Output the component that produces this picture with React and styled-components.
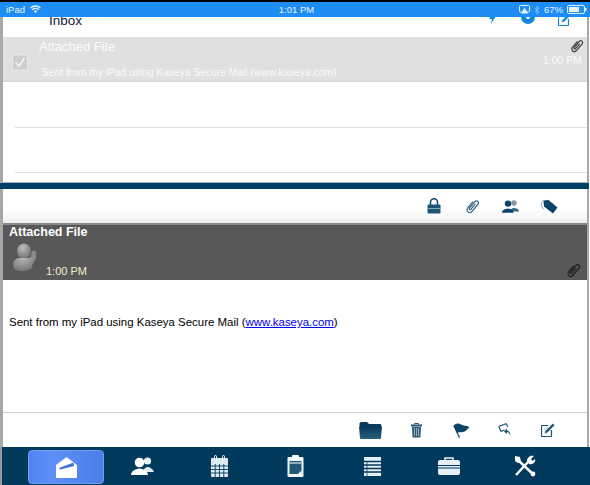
import React from "react";
import styled, { createGlobalStyle } from "styled-components";

const Global = createGlobalStyle`
  html, body { margin: 0; padding: 0; background: #fff; }
  #root { width: 590px; height: 485px; overflow: hidden; }
  a { color: #0000ee; }
`;
const Page = styled.div`
  width: 590px; height: 485px; display: flex; flex-direction: column; overflow: hidden;
  font-family: "Liberation Sans", Arial, sans-serif; background: #fff;
  border-top: 2px solid #000; box-sizing: border-box;
`;
const StatusBar = styled.div`
  height: 15px; flex: none; background: #1e8cf5; color: #e8f4ff; font-size: 9.5px;
  display: grid; grid-template-columns: 1fr auto 1fr; align-items: center; padding: 0 3px 0 6px;
`;
const StatusSide = styled.div`
  display: flex; align-items: center; gap: ${p => p.$gap || 5}px; justify-content: ${p => p.$end ? "flex-end" : "flex-start"};
`;
const Framed = styled.div`
  flex: 1; min-height: 0; display: flex; flex-direction: column;
  border-left: 3px solid #a8a8a8; border-right: 2px solid #a8a8a8; margin-right: 1px;
`;
const ListPane = styled.section`
  height: 165px; flex: none; display: flex; flex-direction: column; overflow: hidden; background: #fff;
`;
const ListHead = styled.div`
  height: 20px; flex: none; position: relative; overflow: hidden; display: flex;
`;
const InboxTitle = styled.div`
  position: absolute; left: 46px; top: -4px; font-size: 13.5px; color: #15233a;
`;
const HeadIcons = styled.div`
  position: absolute; right: 15px; top: -5px; display: flex; gap: 23px; align-items: flex-start;
`;
const SelectedRow = styled.div`
  height: 45px; flex: none; background: #e0e0df; display: grid; grid-template-columns: 36px 1fr auto;
  color: #fff; border-bottom: 1px solid #d4d4d4; box-sizing: border-box;
`;
const CheckCell = styled.div`
  display: flex; align-items: center; padding: 6px 0 0 9px;
`;
const RowText = styled.div`
  display: flex; flex-direction: column;
`;
const RowTitle = styled.div`font-size: 13px; line-height: 19px; color: #fbfbfb;`;
const RowSnippet = styled.div`font-size: 10px; line-height: 12px; margin: 11px 0 0 3px; color: #fafafa; letter-spacing: .12px;`;
const RowMeta = styled.div`
  display: flex; flex-direction: column; align-items: flex-end; padding: 1px 5px 0 0; font-size: 10.5px; color: #fafafa; line-height: 12px;
`;
const RowClip = styled.div`line-height: 0; margin-right: -3px;`;
const EmptyRow = styled.div`
  height: ${p => p.$h}px; flex: none; box-sizing: border-box; border-bottom: 1px solid #dfdfdf; margin-left: 12px;
`;
const Divider = styled.div`
  height: 7px; flex: none; background: #004068; border-top: 1px solid #a9aeb2; box-sizing: border-box;
  margin: 0 -2px 0 -3px;
`;
const Toolbar = styled.div`
  flex: none; height: ${p => p.$h}px; display: flex; align-items: center; justify-content: flex-end;
  padding-right: ${p => p.$pr}px; background: ${p => p.$bg || "#fff"};
`;
const ToolSlot = styled.div`
  width: ${p => p.$w}px; display: flex; justify-content: center; align-items: center;
`;
const MessageHead = styled.header`
  height: 57px; flex: none; background: #595858; border-top: 2px solid #8a8a8a; box-sizing: border-box;
  display: grid; grid-template-columns: auto 1fr auto; grid-template-rows: auto 1fr; padding: 0 5px 0 6px; color: #fff;
`;
const HeadTitle = styled.div`
  grid-column: 1 / 4; font-size: 12.5px; font-weight: 700; line-height: 14px; color: #fff;
`;
const AvatarBox = styled.div`
  width: 30px; box-sizing: border-box; display: flex; align-items: flex-start; padding: 4px 0 0 4px;
`;
const HeadTime = styled.div`
  font-size: 11px; color: #f3eccb; align-self: end; padding: 0 0 3px 7px;
`;
const HeadClip = styled.div`align-self: end; justify-self: end; line-height: 0; padding-bottom: 1px;`;
const Body = styled.div`
  flex: 1; min-height: 0; padding: 36px 6px 0; font-size: 11.45px; line-height: 13px; color: #000; border-bottom: 1px solid #d0d0d0;
`;
const Nav = styled.nav`
  height: 38px; flex: none; background: #013a5c; display: grid; grid-template-columns: repeat(7, 76.5px);
  padding-left: 28px; box-sizing: border-box; align-items: stretch; position: relative;
`;
const NavItem = styled.div`
  display: flex; align-items: center; justify-content: center; margin-top: ${p => p.$active ? 3 : 0}px;
  border-radius: 4px; box-sizing: border-box;
  ${p => p.$active ? `background: linear-gradient(90deg,#4f83ee,#5f90fa 30%,#4a7de6); border: 1px solid #6fa0f0; height: 34px; width:76px;` : ""}
`;
const Edge = styled.div`
  position: absolute; left: 0; top: 0; bottom: 0; width: 2px; background: #9a9a9a;
`;

const Wifi = () => (
  <svg width="11" height="9" viewBox="0 0 11 9"><path d="M.6 3a7 7 0 0 1 9.8 0M2.2 4.8a4.8 4.8 0 0 1 6.6 0" fill="none" stroke="#e6f3ff" strokeWidth="1.3"/><path d="M3.8 6.2a2.4 2.4 0 0 1 3.4 0L5.5 8z" fill="#e6f3ff"/></svg>
);
const Airplay = () => (
  <svg width="11" height="9" viewBox="0 0 11 9"><rect x=".5" y=".5" width="10" height="6.5" rx="1" fill="#1e8cf5" stroke="#e6f3ff"/><path d="M5.5 2.5 9 8.5H2z" fill="#e6f3ff"/></svg>
);
const Bluetooth = () => (
  <svg width="6" height="10" viewBox="0 0 6 10"><path d="M.5 2.8 5 7 3 9V1l2 2L.5 7.2" fill="none" stroke="#7fbdf5" strokeWidth="1"/></svg>
);
const Battery = () => (
  <svg width="20" height="9" viewBox="0 0 20 9"><rect x=".5" y=".5" width="17" height="8" rx="1.5" fill="none" stroke="#e6f3ff"/><rect x="2" y="2" width="10" height="5" fill="#e6f3ff"/><rect x="18" y="3" width="1.5" height="3" fill="#e6f3ff"/></svg>
);
const Check = () => (
  <svg width="16" height="17" viewBox="0 0 16 17"><rect x=".5" y="1" width="15" height="15" rx="2" fill="#cfcdcf" stroke="#e9e9e9"/><path d="M3.5 8.5 7 12l5.5-8" fill="none" stroke="#f4f4f4" strokeWidth="1.6"/></svg>
);
const Clip = ({ size = 15, color = "#3e3e3e", w = 1.2 }) => (
  <svg width={size} height={size} viewBox="0 0 16 16"><path d="M5.4 4.5V12a2.600 2.600 0 0 0 5.200 0V3a1.900 1.900 0 0 0-3.800 0v8a.9.9 0 0 0 1.800 0V5" fill="none" stroke={color} strokeWidth={w} strokeLinecap="round" transform="rotate(40 8 8)"/></svg>
);
const Lock = () => (
  <svg width="14" height="16" viewBox="0 0 14 16"><path d="M3.500 7V4.200a3.500 3.500 0 0 1 7 0V7" fill="none" stroke="#0a4468" strokeWidth="1.500"/><rect x=".5" y="6.500" width="13" height="9" rx="1" fill="#1a5678"/><path d="M1 10.500h12" stroke="#7ea3ba"/></svg>
);
const People = ({ c = "#0a4468" }) => (
  <svg width="17" height="13" viewBox="0 0 17 13"><circle cx="12" cy="3" r="2.700" fill="#7f98a8"/><path d="M8 11.500c0-2.500 2-3.300 4-3.800 2 .5 5 1 5 3.800z" fill={c} opacity=".8"/><circle cx="6" cy="3.600" r="3.200" fill={c}/><path d="M0 12.800c0-3 3-3.800 6-4.400 3 .6 5.500 1.400 5.500 4.400z" fill={c}/></svg>
);
const Tag = () => (
  <svg width="17" height="15" viewBox="0 0 17 15"><path d="M2.500 1.500 7.500 1l9 7.500-4.500 6-9-7z" fill="#0a4468"/><path d="M3.500 1C-.5 3-.5 7 3 10.500" fill="none" stroke="#8aa8bb"/></svg>
);
const Folder = () => (
  <svg width="23" height="18" viewBox="0 0 23 18"><defs><linearGradient id="fg" x1="0" y1="0" x2="0" y2="1"><stop offset="0" stopColor="#0a3c5c"/><stop offset="1" stopColor="#2a5f80"/></linearGradient></defs><path d="M.5 2.500Q.5 1 2 1h6l2 2h11q1.500 0 1.500 1.500V6H.5z" fill="#0a3a5a"/><path d="M0 6h23l-1 11a1 1 0 0 1-1 1H2a1 1 0 0 1-1-1z" fill="url(#fg)"/></svg>
);
const Trash = () => (
  <svg width="11" height="15" viewBox="0 0 11 15"><path d="M3.500 1.500V.5h4v1" fill="none" stroke="#345f7a"/><rect x="0" y="1.500" width="11" height="2" fill="#24526f"/><path d="M1 4h9l-.6 10.500H1.600z" fill="#2e5b78"/><path d="M3.500 5v8M5.500 5v8M7.500 5v8" stroke="#a9c0cf" strokeWidth=".8"/></svg>
);
const Flag = () => (
  <svg width="17" height="15" viewBox="0 0 17 15"><path d="M.8 2.500 6.500 14.500" stroke="#0a4468" strokeWidth="1.200"/><path d="M.8 2.500C3 .2 6 .2 8 1.500c2.500 1.500 5 .8 8.500 2.500C14 6.500 12.500 9 8.500 9.200 6.500 9.500 5.500 8.500 3.800 10z" fill="#0a4468"/></svg>
);
const Reply = () => (
  <svg width="14" height="14" viewBox="0 0 14 14"><path d="M.8 3.500 8 .8l2 3.200M3 8.500.8 3.500M3 8.500l3.500-1.500" fill="none" stroke="#1c506f" strokeWidth="1.200"/><path d="M12.500 13C12.300 9.500 11 7.500 9 7.500V5.500L6 8.500l3 2.500V9c1.500 0 2.500 1.500 3.500 4z" fill="#1c506f"/></svg>
);
const Compose = ({ c = "#1c506f" }) => (
  <svg width="14" height="14" viewBox="0 0 14 14"><path d="M10.500 7v5.700a.8.8 0 0 1-.8.8H1.300a.8.8 0 0 1-.8-.8V3.300a.8.8 0 0 1 .8-.8h6" fill="none" stroke={c} strokeWidth="1.200"/><path d="M3 5h4M3 7h2M4 10.300 4.600 8 11.800.8l1.500 1.500L6.200 9.500z" fill={c} stroke={c} strokeWidth=".3"/></svg>
);
const Avatar = () => (
  <svg width="24" height="29" viewBox="0 0 24 29"><defs><radialGradient id="av" cx=".4" cy=".3" r=".8"><stop offset="0" stopColor="#bdbdbd"/><stop offset="1" stopColor="#6b6b6b"/></radialGradient></defs><ellipse cx="11" cy="8" rx="7" ry="7.500" fill="url(#av)"/><path d="M1 26c-2-6 0-10 5-11h9c2.500 0 3.500-1.500 3.500-5 .5-3.500 4.500-3.500 5 0 .3 6-2 9.500-4 11l-.5 4c-4 4-14 4-18 1z" fill="url(#av)"/></svg>
);
const NavMail = () => (
  <svg width="21" height="21" viewBox="0 0 21 21"><path d="M0 8 10.500 0 21 8v12a1 1 0 0 1-1 1H1a1 1 0 0 1-1-1z" fill="#fff"/><path d="M3 11 17.500 5.500 18 9 4 12.500z" fill="#3f6fd8"/><path d="M3 13c5 1.500 10 1 15-2v5H3z" fill="#fff"/></svg>
);
const NavPeople = () => (
  <svg width="23" height="18" viewBox="0 0 23 18"><circle cx="16.500" cy="4" r="3.600" fill="#e8f2f7"/><path d="M12 15c.5-3 2.500-5 4.500-5s5.500 2 6.500 5z" fill="#dfeaf1"/><circle cx="8.500" cy="5.500" r="4.800" fill="#fff"/><path d="M0 18c.3-4 4-6 8.500-6.500 4.500.5 8 2.500 8.500 6.500z" fill="#fff"/></svg>
);
const NavCal = () => (
  <svg width="17" height="22" viewBox="0 0 17 22"><rect x="0" y="3" width="17" height="19" rx="1" fill="#dfeaf1"/><path d="M3.500 5V1.500a1 1 0 0 1 2 0V5M11.500 5V1.500a1 1 0 0 1 2 0V5" fill="none" stroke="#fff" strokeWidth="1"/><path d="M0 11h17M0 14.500h17M0 18h17M4.200 9v13M8.500 9v13M12.800 9v13" stroke="#013a5c" strokeWidth=".9"/></svg>
);
const NavClip = () => (
  <svg width="17" height="22" viewBox="0 0 17 22"><rect x=".5" y="2" width="16" height="20" rx="1" fill="#eef4f7"/><rect x="5" y="0" width="7" height="4" rx="1" fill="#fff"/><rect x="2.500" y="6" width="12" height="13" fill="#225877"/><path d="M2.500 8h12" stroke="#fff" strokeWidth="1"/><path d="M11 19l3.500-3.500V19z" fill="#fff"/></svg>
);
const NavList = () => (
  <svg width="17" height="19" viewBox="0 0 17 19"><rect width="17" height="19" fill="#e6eff4"/><path d="M0 4.500h17M0 8h17M0 11.500h17M0 15h17" stroke="#013a5c" strokeWidth="1.300"/><path d="M3 4v15" stroke="#013a5c" strokeWidth=".7"/></svg>
);
const NavCase = () => (
  <svg width="22" height="18" viewBox="0 0 22 18"><path d="M7 3.500V1h8v2.500" fill="none" stroke="#eef4f7" strokeWidth="1.500"/><rect y="3" width="22" height="15" rx="2" fill="#e6eff4"/><path d="M0 8.500h22M0 11h22" stroke="#013a5c" strokeWidth="1.100"/></svg>
);
const NavTools = () => (
  <svg width="22" height="22" viewBox="0 0 22 22"><path d="M2 20 14 7" stroke="#fff" strokeWidth="2.400"/><path d="M20 20 5 6" stroke="#fff" strokeWidth="2.400"/><path d="M1 1l5 1 1 5-3 1-3-2z" fill="#fff"/><path d="M13 6c0-4 4-6 7-5l-3 3 1.500 2L21 4c1 3-2 6-6 5z" fill="#fff"/><circle cx="19" cy="19" r="2.400" fill="#fff"/></svg>
);

export default function App() {
  return (
    <Page>
      <Global />
      <StatusBar>
        <StatusSide><span>iPad</span><Wifi /></StatusSide>
        <span>1:01 PM</span>
        <StatusSide $end $gap={4}><Airplay /><Bluetooth /><span>67%</span><Battery /></StatusSide>
      </StatusBar>
      <Framed>
        <ListPane>
          <ListHead>
            <InboxTitle>Inbox</InboxTitle>
            <HeadIcons>
              <svg width="12" height="12" viewBox="0 0 12 12"><path d="M7 0 3 7h3l-1 5 5-8H6.500z" fill="#1089d8"/></svg>
              <svg width="14" height="12" viewBox="0 0 14 12"><circle cx="7" cy="5" r="7" fill="#1089d8"/><path d="M3.500 4 7 7.500 10.500 4z" fill="#fff"/></svg>
              <Compose c="#1089d8" />
            </HeadIcons>
          </ListHead>
          <SelectedRow>
            <CheckCell><Check /></CheckCell>
            <RowText>
              <RowTitle>Attached File</RowTitle>
              <RowSnippet>Sent from my iPad using Kaseya Secure Mail (www.kaseya.com)</RowSnippet>
            </RowText>
            <RowMeta><RowClip><Clip size={16} /></RowClip><span>1:00 PM</span></RowMeta>
          </SelectedRow>
          <EmptyRow $h={46} />
          <EmptyRow $h={45} />
        </ListPane>
        <Divider />
        <Toolbar $h={34} $pr={19} $bg="linear-gradient(#fff 60%, #eef0f0)">
          <ToolSlot $w={38}><Lock /></ToolSlot>
          <ToolSlot $w={38}><Clip size={17} color="#2f5d7a" w={1.100} /></ToolSlot>
          <ToolSlot $w={39}><People /></ToolSlot>
          <ToolSlot $w={38}><Tag /></ToolSlot>
        </Toolbar>
        <MessageHead>
          <HeadTitle>Attached File</HeadTitle>
          <AvatarBox><Avatar /></AvatarBox>
          <HeadTime>1:00 PM</HeadTime>
          <HeadClip><Clip size={17} color="#222" /></HeadClip>
        </MessageHead>
        <Body>
          Sent from my iPad using Kaseya Secure Mail (<a href="#k">www.kaseya.com</a>)
        </Body>
        <Toolbar $h={34} $pr={18}>
          <ToolSlot $w={46}><Folder /></ToolSlot>
          <ToolSlot $w={46}><Trash /></ToolSlot>
          <ToolSlot $w={44}><Flag /></ToolSlot>
          <ToolSlot $w={44}><Reply /></ToolSlot>
          <ToolSlot $w={42}><Compose /></ToolSlot>
        </Toolbar>
      </Framed>
      <Nav>
        <Edge />
        <NavItem $active><NavMail /></NavItem>
        <NavItem><NavPeople /></NavItem>
        <NavItem><NavCal /></NavItem>
        <NavItem><NavClip /></NavItem>
        <NavItem><NavList /></NavItem>
        <NavItem><NavCase /></NavItem>
        <NavItem><NavTools /></NavItem>
      </Nav>
    </Page>
  );
}
